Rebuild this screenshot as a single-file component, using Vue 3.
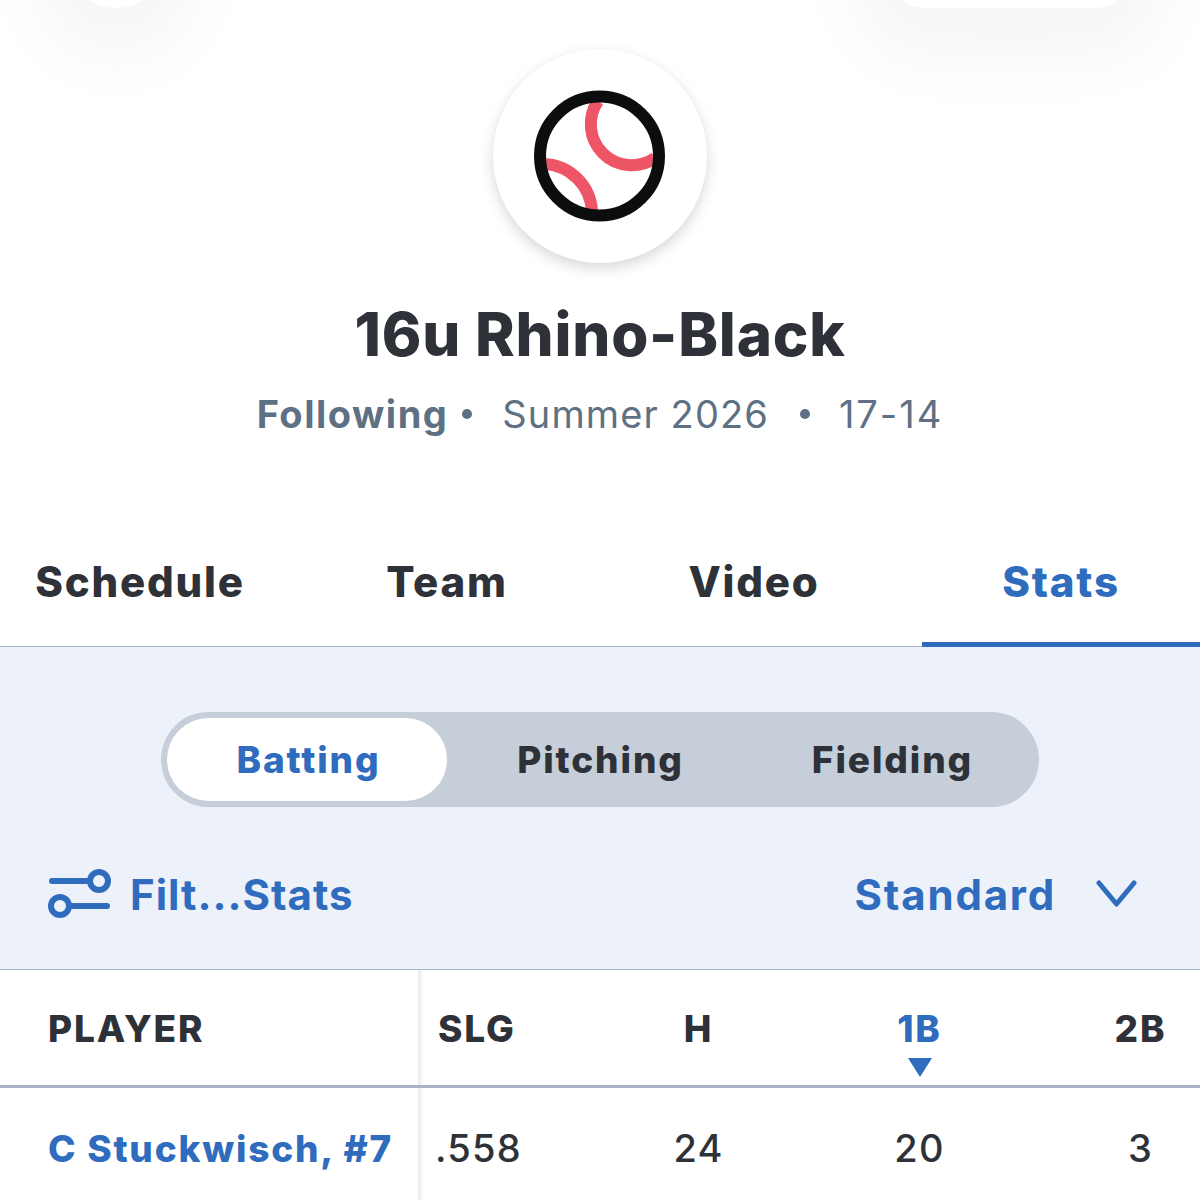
<template>
  <div class="page">
    <!-- boutons du haut, coupés par le bord de l'écran -->
    <div class="top-btn top-btn-left"></div>
    <div class="top-btn top-btn-right"></div>

    <header class="team-head">
      <div class="avatar">
        <svg width="140" height="140" viewBox="0 0 140 140" fill="none">
          <path d="M68 15 A41 41 0 0 0 125 72" stroke="#ee5566" stroke-width="12" />
          <path d="M14 78 A50 50 0 0 1 62 126" stroke="#ee5566" stroke-width="12" />
          <circle cx="69.5" cy="70" r="59.5" stroke="#0c0d0f" stroke-width="12" />
        </svg>
      </div>
      <h1 class="team-name">{{ team.name }}</h1>
      <p class="team-meta">
        <strong>Following</strong>
        <span class="dot dot-first"></span>
        <span>{{ team.season }}</span>
        <span class="dot dot-second"></span>
        <span class="record">{{ team.record }}</span>
      </p>
    </header>

    <nav class="tabs">
      <div v-for="tab in tabs" :key="tab" class="tab" :class="{ active: tab === 'Stats' }">{{ tab }}</div>
    </nav>

    <section class="panel">
      <div class="segments">
        <div v-for="seg in segments" :key="seg" class="segment" :class="{ active: seg === 'Batting' }">{{ seg }}</div>
      </div>
      <div class="filters">
        <div class="filter-left">
          <svg width="64" height="52" viewBox="0 0 64 52" fill="none" stroke="#2f6cbe" stroke-width="6" stroke-linecap="round">
            <path d="M4 13 H41" />
            <circle cx="51" cy="13" r="9" />
            <circle cx="12" cy="38" r="9" />
            <path d="M21 38 H59" />
          </svg>
          <span>Filt...Stats</span>
        </div>
        <div class="filter-right">
          <span class="standard">Standard</span>
          <svg class="chevron" width="44" height="28" viewBox="0 0 44 28" fill="none" stroke="#2f6cbe" stroke-width="5" stroke-linecap="round" stroke-linejoin="round">
            <path d="M5 4 L22.5 25 L40 4" />
          </svg>
        </div>
      </div>
    </section>

    <section class="table">
      <div class="row row-head">
        <div class="cell cell-player">PLAYER</div>
        <div class="cell cell-first">SLG</div>
        <div class="cell">H</div>
        <div class="cell sorted">1B<span class="sort-arrow"></span></div>
        <div class="cell">2B</div>
      </div>
      <div v-for="p in players" :key="p.name" class="row row-body">
        <div class="cell cell-player player-link">{{ p.name }}</div>
        <div class="cell cell-first">{{ p.slg }}</div>
        <div class="cell">{{ p.h }}</div>
        <div class="cell">{{ p.b1 }}</div>
        <div class="cell">{{ p.b2 }}</div>
      </div>
      <div class="col-shadow"></div>
    </section>
  </div>
</template>

<script setup>
const team = { name: '16u Rhino-Black', season: 'Summer 2026', record: '17-14' }
const tabs = ['Schedule', 'Team', 'Video', 'Stats']
const segments = ['Batting', 'Pitching', 'Fielding']
const players = [{ name: 'C Stuckwisch, #7', slg: '.558', h: 24, b1: 20, b2: 3 }]
</script>

<style>
html, body {
  margin: 0;
  background: #fff;
}
</style>

<style scoped>
.page {
  position: relative;
  width: 1200px;
  height: 1200px;
  overflow: hidden;
  background: #fff;
  font-family: Inter, "Liberation Sans", sans-serif;
  color: #2e3138;
}

.top-btn {
  position: absolute;
  top: -92px;
  height: 100px;
  background: #fff;
  box-shadow: 0 20px 70px 30px rgba(0, 0, 0, 0.04);
}
.top-btn-left {
  left: 66px;
  width: 100px;
  border-radius: 50%;
}
.top-btn-right {
  left: 885px;
  width: 250px;
  border-radius: 40px;
}

.team-head {
  position: relative;
  display: flex;
  flex-direction: column;
  align-items: center;
  height: 542px;
  padding-top: 49px;
  box-sizing: border-box;
}
.avatar {
  width: 214px;
  height: 214px;
  border-radius: 50%;
  background: #fff;
  box-shadow: 0 5px 14px rgba(0, 0, 0, 0.16);
  display: flex;
  align-items: center;
  justify-content: center;
  flex-shrink: 0;
}
.team-name {
  margin: 37px 0 0;
  font-size: 60px;
  line-height: 68px;
  font-weight: 800;
  letter-spacing: 0.8px;
}
.team-meta {
  margin: 23px 0 0;
  display: flex;
  align-items: center;
  font-size: 38px;
  line-height: 46px;
  letter-spacing: 1.1px;
  color: #5e7083;
}
.team-meta strong {
  font-weight: 700;
  letter-spacing: 1.5px;
}
.record {
  letter-spacing: 2px;
}
.dot {
  width: 10px;
  height: 10px;
  border-radius: 50%;
  background: #5e7083;
}
.dot-first {
  margin: 0 30px 0 14px;
}
.dot-second {
  margin: 0 29px 0 31px;
}

.tabs {
  display: grid;
  grid-template-columns: repeat(4, 278px);
  column-gap: 29px;
  height: 105px;
  padding-left: 1px;
}
.tab {
  display: flex;
  align-items: center;
  justify-content: center;
  font-size: 42px;
  font-weight: 800;
  letter-spacing: 1.8px;
  padding-bottom: 26px;
  box-sizing: border-box;
  height: 105px;
}
.tab.active {
  color: #2f6cbe;
  border-bottom: 5px solid #2f6cbe;
  padding-bottom: 21px;
}

.panel {
  height: 324px;
  box-sizing: border-box;
  background: #ecf1fa;
  border-top: 1px solid #a9b5c8;
  border-bottom: 1px solid #a9b5c8;
  margin-top: -1px;
  padding: 65px 48px 0 48px;
}
.segments {
  display: flex;
  gap: 12px;
  width: 878px;
  height: 95px;
  margin: 0 auto;
  padding: 6px;
  box-sizing: border-box;
  border-radius: 48px;
  background: #c5ced9;
}
.segment {
  width: 280px;
  box-sizing: border-box;
  padding-left: 3px;
  display: flex;
  align-items: center;
  justify-content: center;
  font-size: 37px;
  font-weight: 800;
  letter-spacing: 1.9px;
  border-radius: 42px;
}
.segment.active {
  background: #fff;
  color: #2f6cbe;
}

.filters {
  display: flex;
  justify-content: space-between;
  align-items: center;
  margin-top: 61px;
  font-size: 42px;
  font-weight: 700;
  letter-spacing: 1px;
  color: #2f6cbe;
}
.filter-left,
.filter-right {
  display: flex;
  align-items: center;
}
.filter-left {
  gap: 18px;
}
.filter-right {
  gap: 38px;
  margin-right: 14px;
}
.standard {
  letter-spacing: 1.8px;
}
.chevron {
  margin-top: -2px;
}

.table {
  position: relative;
}
.row {
  display: grid;
  grid-template-columns: 418px 170px 221px 221px 221px;
  align-items: center;
}
.row-head {
  height: 118px;
  box-sizing: border-box;
  padding-top: 2px;
  border-bottom: 3px solid #a7b4c3;
  font-size: 37px;
  font-weight: 800;
  letter-spacing: 1.8px;
}
.row-body {
  height: 112px;
  box-sizing: border-box;
  padding-top: 8px;
  font-size: 38px;
  font-weight: 500;
  letter-spacing: 1.2px;
}
.cell {
  position: relative;
  text-align: center;
}
.cell-player {
  text-align: left;
  padding-left: 48px;
}
.cell-first {
  text-align: left;
  padding-left: 20px;
}
.row-body .cell-first {
  padding-left: 17px;
}
.player-link {
  color: #2f6cbe;
  font-size: 37px;
  font-weight: 800;
  letter-spacing: 1.8px;
  white-space: nowrap;
}
.sorted {
  color: #2f6cbe;
}
.sort-arrow {
  position: absolute;
  left: 50%;
  top: 52px;
  margin-left: -12px;
  border-left: 12px solid transparent;
  border-right: 12px solid transparent;
  border-top: 19px solid #2f6cbe;
}
.col-shadow {
  position: absolute;
  left: 418px;
  top: 0;
  bottom: 0;
  width: 6px;
  background: linear-gradient(90deg, rgba(170, 185, 205, 0.3), rgba(170, 185, 205, 0));
}
</style>
